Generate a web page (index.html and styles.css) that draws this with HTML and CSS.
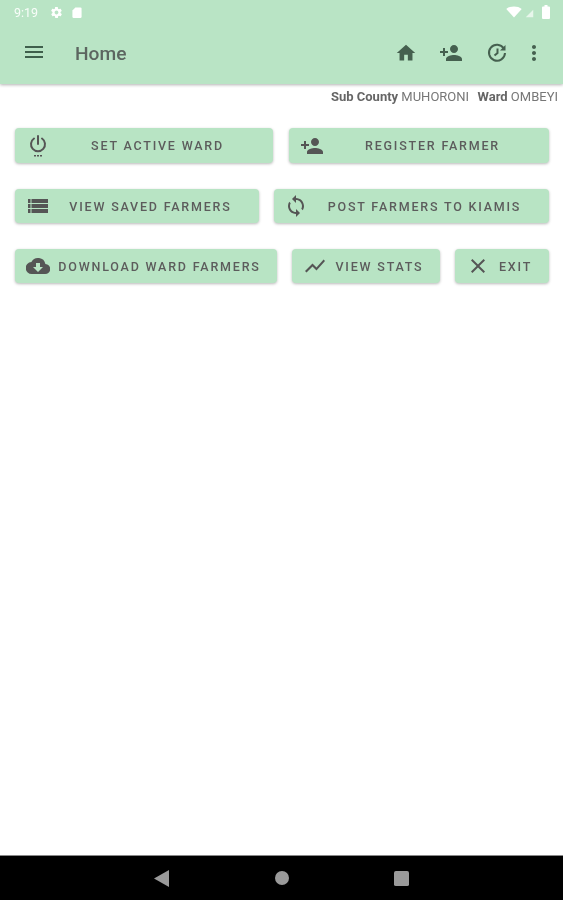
FILE: index.html
```html
<!DOCTYPE html>
<html lang="en">
<head>
<meta charset="utf-8">
<title>Home</title>
<link rel="stylesheet" href="styles.css">
</head>
<body>
<div class="screen">
  <header class="appbar">
    <div class="status">
      <span class="time">9:19</span>
      <svg class="st-ic" viewBox="0 0 24 24" width="13" height="13"><path fill="#fff" d="M19.4 13c0-.3.1-.6.1-1s0-.7-.1-1l2.100-1.600c.2-.2.2-.4.1-.6l-2-3.500c-.1-.2-.4-.3-.6-.2l-2.500 1c-.5-.4-1.100-.7-1.700-1l-.4-2.600c0-.3-.2-.5-.5-.5h-4c-.2 0-.5.2-.5.400l-.4 2.700c-.6.2-1.100.6-1.700 1l-2.400-1c-.3-.1-.5 0-.7.2l-2 3.500c-.1.2 0 .4.200.6L4.600 11c0 .3-.1.7-.1 1s0 .7.1 1l-2.100 1.600c-.2.2-.2.4-.1.6l2 3.500c.1.200.4.300.6.200l2.500-1c.5.400 1.100.700 1.700 1l.4 2.600c0 .3.2.5.5.5h4c.2 0 .5-.2.5-.4l.4-2.700c.6-.2 1.100-.6 1.700-1l2.400 1c.3.100.5 0 .7-.2l2-3.500c.1-.2 0-.4-.2-.6L19.400 13zM12 15.500c-1.900 0-3.500-1.600-3.500-3.500s1.600-3.500 3.500-3.500 3.500 1.600 3.500 3.500-1.600 3.500-3.500 3.500z"/></svg>
      <svg class="st-ic" viewBox="0 0 12 14" width="10" height="13"><path fill="#fff" d="M4 1h6a1.500 1.500 0 0 1 1.500 1.500v9.500a1.500 1.500 0 0 1-1.500 1.500H2A1.500 1.500 0 0 1 .5 12V4.500z"/></svg>
      <span class="status-gap"></span>
      <svg class="st-wifi" viewBox="0 0 18 14" width="16" height="12"><path fill="#fff" d="M0 3.500C2.300 1.400 5.500.5 9 .5s6.700.9 9 3L9 13.500z"/></svg>
      <svg class="st-signal" viewBox="0 0 12 12" width="9" height="9"><path fill="#fff" fill-opacity=".65" d="M11 1v10H1z"/></svg>
      <svg class="st-batt" viewBox="0 0 8 14" width="8" height="14"><path fill="#fff" d="M2.500 0h3v1.500H7a1 1 0 0 1 1 1V13a1 1 0 0 1-1 1H1a1 1 0 0 1-1-1V2.500a1 1 0 0 1 1-1h1.500z"/></svg>
    </div>
    <div class="toolbar">
      <svg class="menu" viewBox="0 0 24 24" width="24" height="24"><path fill="#3f5f4c" d="M3 18h18v-2H3zm0-5h18v-2H3zm0-7v2h18V6z"/></svg>
      <h1 class="title">Home</h1>
      <div class="actions">
        <svg viewBox="-1 -1 26 26" width="24" height="24"><path fill="#45604f" d="M10 20v-6h4v6h5v-8h3L12 3 2 12h3v8z"/></svg>
        <svg viewBox="0 0 24 24" width="24" height="24"><path fill="#45604f" d="M15 12c2.200 0 4-1.800 4-4s-1.800-4-4-4-4 1.800-4 4 1.800 4 4 4zm-9-2V7H4v3H1v2h3v3h2v-3h3v-2H6zm9 4c-2.700 0-8 1.300-8 4v2h16v-2c0-2.700-5.300-4-8-4z"/></svg>
        <svg viewBox="0 0 24 24" width="24" height="24"><path fill="none" stroke="#45604f" stroke-width="2" d="M18.800 7.500A8 8 0 1 0 20 12M12.500 7.500V12l-3 2.500"/><path fill="#45604f" d="M20.500 4v5.500H15z"/></svg>
        <svg class="more" viewBox="0 0 24 24" width="24" height="24"><path fill="#45604f" d="M12 8c1.100 0 2-.9 2-2s-.9-2-2-2-2 .9-2 2 .9 2 2 2zm0 2c-1.100 0-2 .9-2 2s.9 2 2 2 2-.9 2-2-.9-2-2-2zm0 6c-1.100 0-2 .9-2 2s.9 2 2 2 2-.9 2-2-.9-2-2-2z"/></svg>
      </div>
    </div>
  </header>

  <main class="content">
    <p class="location"><b>Sub County</b> MUHORONI &nbsp;<b class="ward">Ward</b> OMBEYI</p>
    <div class="rows">
      <div class="row row-a">
        <button class="btn">
          <svg class="btn-ic" viewBox="0 0 24 24" width="24" height="24"><path fill="none" stroke="#555" stroke-width="2" stroke-linecap="round" d="M12 2v8M8 4.500a7 7 0 1 0 8 0"/><path fill="#555" d="M8 21h2v1.500H8zm3 0h2v1.500h-2zm3 0h2v1.500h-2z"/></svg>
          <span class="lbl">SET ACTIVE WARD</span>
        </button>
        <button class="btn">
          <svg class="btn-ic" viewBox="0 0 24 24" width="24" height="24"><path fill="#555" d="M15 12c2.200 0 4-1.800 4-4s-1.800-4-4-4-4 1.800-4 4 1.800 4 4 4zm-9-2V7H4v3H1v2h3v3h2v-3h3v-2H6zm9 4c-2.700 0-8 1.300-8 4v2h16v-2c0-2.700-5.300-4-8-4z"/></svg>
          <span class="lbl">REGISTER FARMER</span>
        </button>
      </div>
      <div class="row row-b">
        <button class="btn">
          <svg class="btn-ic" viewBox="0 0 24 24" width="24" height="24"><path fill="#555" d="M2 5h2.500v4H2zm3.500 0H22v4H5.500zM2 10h2.500v4H2zm3.500 0H22v4H5.500zM2 15h2.500v4H2zm3.500 0H22v4H5.500z"/></svg>
          <span class="lbl">VIEW SAVED FARMERS</span>
        </button>
        <button class="btn">
          <svg class="btn-ic sync" viewBox="0 0 24 24" width="24" height="24"><path fill="#555" d="M12 4V1L8 5l4 4V6c3.300 0 6 2.700 6 6 0 1-.3 2-.7 2.800l1.500 1.500C19.500 15 20 13.600 20 12c0-4.400-3.600-8-8-8zm0 14c-3.300 0-6-2.700-6-6 0-1 .3-2 .7-2.800L5.200 7.700C4.500 9 4 10.400 4 12c0 4.400 3.600 8 8 8v3l4-4-4-4z"/></svg>
          <span class="lbl">POST FARMERS TO KIAMIS</span>
        </button>
      </div>
      <div class="row row-c">
        <button class="btn">
          <svg class="btn-ic" viewBox="0 0 24 24" width="24" height="24"><path fill="#555" d="M19.400 10A7.500 7.500 0 0 0 5.400 8 6 6 0 0 0 6 20h13a5 5 0 0 0 .4-10zM17 13l-5 5-5-5h3V9h4v4z"/></svg>
          <span class="lbl">DOWNLOAD WARD FARMERS</span>
        </button>
        <button class="btn">
          <svg class="btn-ic" viewBox="0 0 24 24" width="24" height="24"><path fill="#555" d="M3.500 18.500l6-6 4 4L22 6.900 20.600 5.500l-7.100 8-4-4L2 17z"/></svg>
          <span class="lbl">VIEW STATS</span>
        </button>
        <button class="btn">
          <svg class="btn-ic" viewBox="0 0 24 24" width="24" height="24"><path fill="#555" d="M19 6.400L17.600 5 12 10.600 6.400 5 5 6.400 10.600 12 5 17.600 6.400 19 12 13.400 17.600 19 19 17.600 13.400 12z"/></svg>
          <span class="lbl">EXIT</span>
        </button>
      </div>
    </div>
  </main>

  <nav class="navbar">
    <svg class="nav-back" viewBox="0 0 16 18" width="15" height="17"><path fill="#9a9a9a" d="M16 0v18L0 9z"/></svg>
    <svg viewBox="0 0 16 16" width="14" height="14"><circle cx="8" cy="8" r="8" fill="#9a9a9a"/></svg>
    <svg viewBox="0 0 16 16" width="15" height="15"><rect width="16" height="16" rx="2" fill="#9a9a9a"/></svg>
  </nav>
</div>
</body>
</html>
```

FILE: styles.css
```css
* { box-sizing: border-box; }
html, body { margin: 0; padding: 0; }
body { background: #fff; font-family: Roboto, "Liberation Sans", sans-serif; }
.screen { width: 563px; height: 900px; display: flex; flex-direction: column; overflow: hidden; filter: blur(0.45px); }

.appbar { height: 84px; background: #b9e4c5; box-shadow: 0 1px 3px rgba(0,0,0,.3); flex: none; position: relative; }
.status { height: 24px; display: flex; align-items: center; padding: 0 13px 0 14px; color: #fff; }
.time { font-size: 12.500px; width: 36px; opacity: .9; }
.st-ic { flex: none; margin-right: 9px; }
.status-gap { flex: 1; }
.st-wifi { flex: none; margin-right: 3px; }
.st-signal { flex: none; margin-right: 8px; margin-top: 2px; }
.st-batt { flex: none; }
.toolbar { height: 60px; display: flex; align-items: center; padding-left: 22px; }
.menu { flex: none; margin-bottom: 4px; }
.title { margin: 0 0 2px 29px; font-size: 19.200px; font-weight: 500; color: #5c6660; }
.actions { margin-left: auto; display: flex; align-items: center; gap: 21.500px; padding: 0 17px 3px 0; }
.actions svg { display: block; }
.actions .more { margin-left: -8px; }

.content { flex: 1; }
.location { margin: 0; height: 44px; padding: 4px 5px 0 0; text-align: right; font-size: 13px; line-height: 17px; color: #777; white-space: nowrap; }
.location b { color: #666; font-weight: 700; }
.location .ward { margin-left: 2px; }
.rows { padding: 0 14px 0 15px; display: flex; flex-direction: column; gap: 26px; }
.row { display: grid; height: 34px; }
.row-a { height: 35px; grid-template-columns: 258px 260px; column-gap: 16px; }
.row-b { grid-template-columns: 244px 275px; column-gap: 15px; }
.row-c { grid-template-columns: 262px 148px 94px; column-gap: 15px; }

.btn { display: flex; align-items: center; justify-content: center; padding: 0 8px 0 11px; border: 0; border-radius: 4px; background: #b8e4c4; box-shadow: 0 1px 3px rgba(0,0,0,.28); font: 500 12.500px Roboto, "Liberation Sans", sans-serif; letter-spacing: 1.800px; color: #5c5c5c; white-space: nowrap; }
.btn-ic { flex: none; }
.btn-ic.sync { margin-left: -1px; }
.lbl { flex: 1; text-align: center; }

.navbar { height: 45px; flex: none; background: #000; display: flex; justify-content: center; align-items: center; gap: 105px; border-top: 1px solid #888; }
.nav-back { margin-right: 1px; }
```
